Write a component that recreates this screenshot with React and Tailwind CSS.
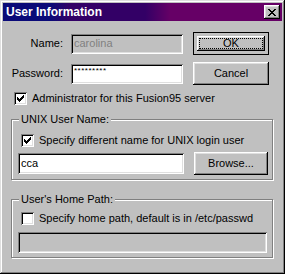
import React from 'react';

const raised = "shadow-[inset_-1px_-1px_0_#000,inset_1px_1px_0_#fff,inset_-2px_-2px_0_#808080,inset_2px_2px_0_#dfdfdf]";
const sunken = "shadow-[inset_1px_1px_0_#808080,inset_-1px_-1px_0_#fff,inset_2px_2px_0_#000,inset_-2px_-2px_0_#dfdfdf]";

const Check = ({ checked }) => (
  <span className={`w-[13px] h-[13px] shrink-0 bg-white flex items-center justify-center ${sunken}`}>
    {checked && (
      <svg width="7" height="7" viewBox="0 0 7 7" shapeRendering="crispEdges">
        <path d="M0 2h1v3h-1z M1 3h1v3h-1z M2 4h1v3h-1z M3 3h1v3h-1z M4 2h1v3h-1z M5 1h1v3h-1z M6 0h1v3h-1z" fill="#000" />
      </svg>
    )}
  </span>
);

const Group = ({ label, className, children }) => (
  <div className={`relative ml-[8px] w-[262px] border border-[#808080] shadow-[inset_1px_1px_0_#fff,1px_1px_0_#fff] ${className}`}>
    <span className="absolute -top-[8px] left-[7px] px-[2px] bg-[#c0c0c0] leading-[14px]">{label}</span>
    {children}
  </div>
);

export default function App() {
  return (
    <div className="w-[285px] h-[274px] bg-[#c0c0c0] p-[3px] text-[11px] text-black font-['Liberation_Sans',Arial,sans-serif] shadow-[inset_-1px_-1px_0_#000,inset_1px_1px_0_#dfdfdf,inset_-2px_-2px_0_#808080,inset_2px_2px_0_#fff] overflow-hidden">
      {/* Title bar */}
      <div className="h-[18px] flex items-center justify-between pl-[3px] pr-[2px] bg-[linear-gradient(90deg,#0a0a78_17%,#330066_24%,#330066_51%,#660066_60%)]">
        <span className="text-white font-bold text-[12px] leading-none">User Information</span>
        <button className={`w-[16px] h-[14px] bg-[#c0c0c0] flex items-center justify-center ${raised}`}>
          <svg width="8" height="7" viewBox="0 0 8 7" shapeRendering="crispEdges">
            <path d="M0 0h2v1h-2z M6 0h2v1h-2z M1 1h2v1h-2z M5 1h2v1h-2z M2 2h4v1h-4z M3 3h2v1h-2z M2 4h4v1h-4z M1 5h2v1h-2z M5 5h2v1h-2z M0 6h2v1h-2z M6 6h2v1h-2z" fill="#000" />
          </svg>
        </button>
      </div>

      {/* Name row */}
      <div className="mt-[11px] h-[23px] flex items-center">
        <span className="w-[60px] text-right">Name:</span>
        <div className={`ml-[8px] w-[112px] h-[20px] flex items-center pl-[3px] text-[#808080] ${sunken}`}>carolina</div>
        <button className="ml-[10px] w-[76px] h-[23px] border border-black p-[3px]">
          <div className={`w-full h-full ${raised} flex`}>
            <div className="m-[2px] flex-1 border border-dotted border-black flex items-center justify-center">OK</div>
          </div>
        </button>
      </div>

      {/* Password row */}
      <div className="mt-[7px] h-[23px] flex items-center">
        <span className="w-[60px] text-right">Password:</span>
        <div className={`ml-[8px] w-[112px] h-[20px] bg-white flex items-start pt-[3px] pl-[3px] text-[8px] leading-[8px] tracking-[0.5px] ${sunken}`}>*********</div>
        <button className={`ml-[10px] w-[76px] h-[23px] flex items-center justify-center ${raised}`}>Cancel</button>
      </div>

      {/* Administrator */}
      <label className="mt-[7px] ml-[11px] flex items-center gap-[5px] h-[13px]">
        <Check checked />
        <span>Administrator for this Fusion95 server</span>
      </label>

      {/* UNIX User Name */}
      <Group label="UNIX User Name:" className="mt-[14px] h-[61px] pt-[14px] pl-[6px]">
        <label className="ml-[3px] flex items-center gap-[5px] h-[13px]">
          <Check checked />
          <span>Specify different name for UNIX login user</span>
        </label>
        <div className="mt-[5px] h-[23px] flex items-center">
          <div className={`w-[166px] h-[21px] bg-white flex items-center pl-[3px] ${sunken}`}>cca</div>
          <button className={`ml-[10px] w-[74px] h-[23px] flex items-center justify-center ${raised}`}>Browse...</button>
        </div>
      </Group>

      {/* Home path */}
      <Group label="User's Home Path:" className="mt-[19px] h-[59px] pt-[12px] pl-[6px]">
        <label className="ml-[3px] flex items-center gap-[5px] h-[13px]">
          <Check />
          <span>Specify home path, default is in /etc/passwd</span>
        </label>
        <div className={`mt-[7px] w-[249px] h-[21px] ${sunken}`} />
      </Group>
    </div>
  );
}
